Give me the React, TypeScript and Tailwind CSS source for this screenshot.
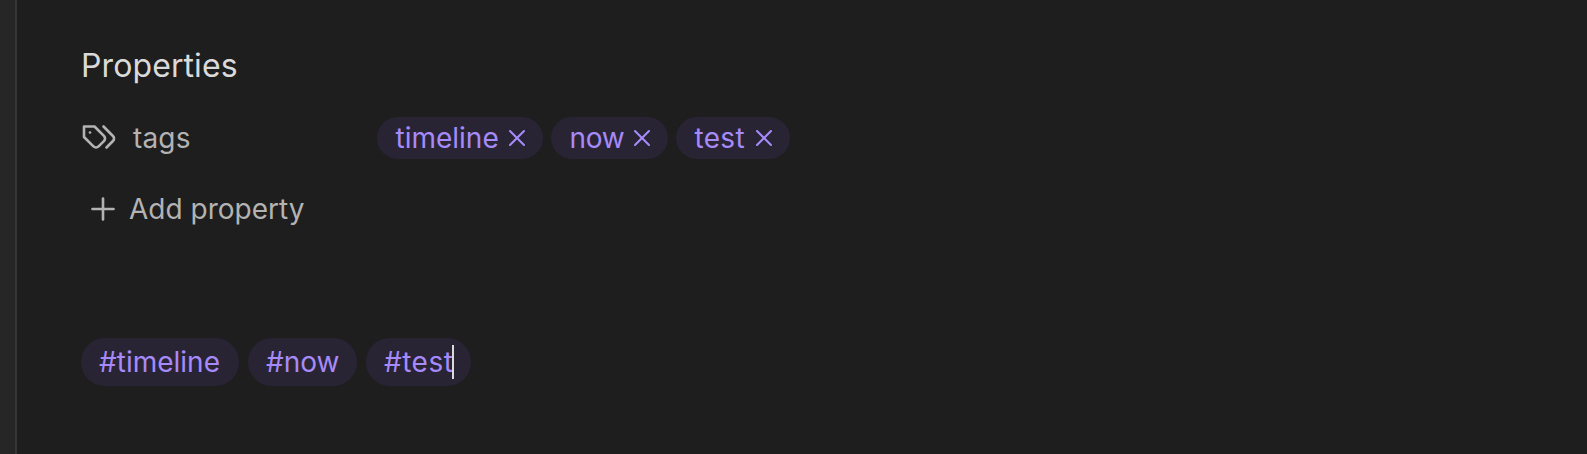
import { Plus, X } from "lucide-react";

const tags = [
  { name: "timeline", propertyWidth: "w-[166px]", inlineWidth: "w-[158px]", tracking: "", inlineTracking: "" },
  { name: "now", propertyWidth: "w-[117px]", inlineWidth: "w-[109px]", tracking: "tracking-[-0.3px]", inlineTracking: "" },
  { name: "test", propertyWidth: "w-[114px]", inlineWidth: "w-[105px]", tracking: "tracking-[0.3px]", inlineTracking: "tracking-[0.5px]" },
];

function TagsIcon() {
  return (
    <svg viewBox="0 0 24 24" fill="none" stroke="currentColor" strokeWidth="1.75" strokeLinecap="round" strokeLinejoin="round" className="mr-4 mb-[2px] size-9">
      <path d="M9 5H2v7l6.29 6.29c.94.94 2.48.94 3.42 0l3.58-3.58c.94-.94.94-2.48 0-3.42L9 5Z" />
      <path d="M6 9.01V9" />
      <path d="m15 5 6.3 6.3a2.4 2.4 0 0 1 0 3.4L17 19" />
    </svg>
  );
}

export default function App() {
  return (
    <div className="flex h-[454px] w-[1587px] overflow-hidden bg-[#1e1e1e] font-['Inter',sans-serif] text-[#b3b3b3]">
      <aside className="h-full w-[17px] shrink-0 border-r-2 border-[#363636] bg-[#262626]" />
      <main className="pl-16 pt-[46px]">
        <h1 className="h-10 text-[32px] leading-10 tracking-[0.1px] text-[#dadada]">Properties</h1>
        <div className="mt-[31px] flex h-[42px] items-center">
          <div className="flex w-[296px] items-center text-[28px] leading-[42px] tracking-[0.15px]">
            <TagsIcon />
            <span>tags</span>
          </div>
          <div className="flex gap-2">
            {tags.map(({ name, propertyWidth, tracking }) => (
              <span key={name} className={`flex h-[42px] items-center justify-between rounded-full bg-[#292434] pl-[18.5px] pr-[12px] text-[28px] text-[#a68af9] ${propertyWidth} ${tracking}`}>
                {name}
                <X size={28} strokeWidth={1.75} />
              </span>
            ))}
          </div>
        </div>
        <button className="mt-[29px] flex h-[42px] items-center pl-1 text-[28px]">
          <Plus size={36} strokeWidth={1.75} className="mr-2" />
          Add property
        </button>
        <div className="mt-[108px] flex gap-[9px]">
          {tags.map(({ name, inlineWidth, inlineTracking }) => (
            <span key={name} className={`flex h-12 items-center rounded-full bg-[#292434] pl-[18px] text-[28px] text-[#a68af9] ${inlineWidth} ${inlineTracking}`}>
              #{name}
              {name === "test" && <span className="-ml-px h-[34px] w-[2px] bg-[#dadada]" />}
            </span>
          ))}
        </div>
      </main>
    </div>
  );
}
